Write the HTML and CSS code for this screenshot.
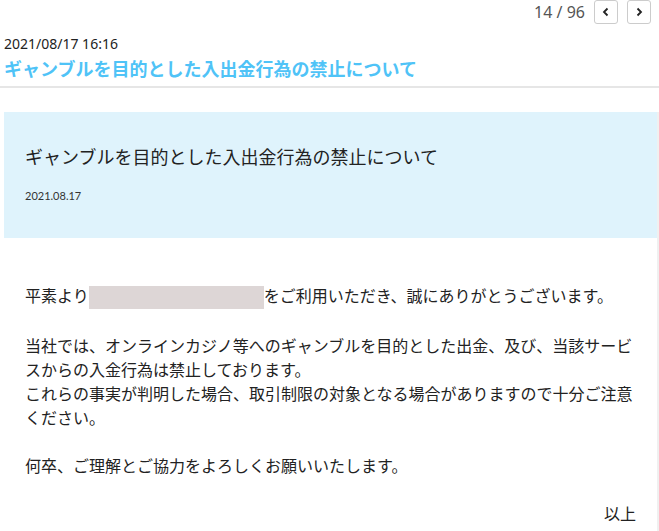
FILE: index.html
```html
<!DOCTYPE html>
<html lang="ja">

<head>
    <meta charset="UTF-8">
    <meta name="viewport" content="width=device-width, initial-scale=1.0">
    <title>お知らせ</title>
    <link rel="stylesheet" href="styles.css">
</head>

<body>
    <div class="pager">
        <span class="pager-count">14 / 96</span>
        <button class="pager-button" type="button">
            <svg width="10" height="10" viewBox="0 0 10 10"><path d="M6.5 1.5 L3 5 L6.5 8.5" fill="none" stroke="#222" stroke-width="1.8"/></svg>
        </button>
        <button class="pager-button" type="button">
            <svg width="10" height="10" viewBox="0 0 10 10"><path d="M3.5 1.5 L7 5 L3.5 8.5" fill="none" stroke="#222" stroke-width="1.8"/></svg>
        </button>
    </div>

    <div class="message-header">
        <div class="message-date">2021/08/17 16:16</div>
        <h1 class="message-title">ギャンブルを目的とした入出金行為の禁止について</h1>
    </div>

    <div class="message-body">
        <div class="notice-box">
            <h2 class="notice-title">ギャンブルを目的とした入出金行為の禁止について</h2>
            <div class="notice-date">2021.08.17</div>
        </div>
        <div class="notice-text">
            <p>平素より<span class="redacted"></span>をご利用いただき、誠にありがとうございます。</p>
            <p>当社では、オンラインカジノ等へのギャンブルを目的とした出金、及び、当該サービスからの入金行為は禁止しております。<br>
                これらの事実が判明した場合、取引制限の対象となる場合がありますので十分ご注意ください。</p>
            <p>何卒、ご理解とご協力をよろしくお願いいたします。</p>
            <p class="closing">以上</p>
        </div>
    </div>
</body>

</html>
```

FILE: styles.css
```css
body {
    font-family: "Noto Sans CJK JP", "Noto Sans", sans-serif;
    background-color: white;
    color: #222;
    margin: 0;
}

.pager {
    display: flex;
    justify-content: flex-end;
    align-items: center;
    height: 24px;
    padding-right: 8px;
}

.pager-count {
    font-family: "Noto Sans", sans-serif;
    font-size: 16px;
    color: #555;
    margin-right: 9px;
}

.pager-button {
    width: 24px;
    height: 24px;
    margin-left: 9px;
    padding: 0;
    display: flex;
    justify-content: center;
    align-items: center;
    background-color: white;
    border: 1px solid #ccc;
    border-radius: 3px;
}

.pager-button:first-of-type {
    margin-left: 0;
}

.message-header {
    padding: 10px 4px 4px;
    border-bottom: 2px solid #e6e6e6;
}

.message-date {
    font-family: "Noto Sans", "Noto Sans CJK JP", sans-serif;
    font-size: 14px;
    line-height: 20px;
    color: #222;
}

.message-title {
    margin: 0;
    font-size: 18px;
    line-height: 28px;
    font-weight: bold;
    color: #4fc3f7;
}

.message-body {
    margin-top: 24px;
    margin-left: 4px;
    border-right: 2px solid #f0f0f0;
    padding-bottom: 20px;
}

.notice-box {
    background-color: #dff3fc;
    padding: 31px 21px 35px;
}

.notice-title {
    margin: 0;
    font-size: 18px;
    line-height: 26px;
    font-weight: normal;
    color: #222;
}

.notice-date {
    margin-top: 20px;
    font-family: "Lato", sans-serif;
    font-size: 11px;
    line-height: 14px;
    color: #333;
}

.notice-text {
    padding: 45px 21px 0;
    font-size: 16px;
    line-height: 24px;
}

.notice-text p {
    margin: 0 0 24px;
}

.redacted {
    display: inline-block;
    width: 175px;
    height: 23px;
    vertical-align: middle;
    background-color: #ddd6d6;
}

.notice-text .closing {
    text-align: right;
    margin: 0;
}
```
